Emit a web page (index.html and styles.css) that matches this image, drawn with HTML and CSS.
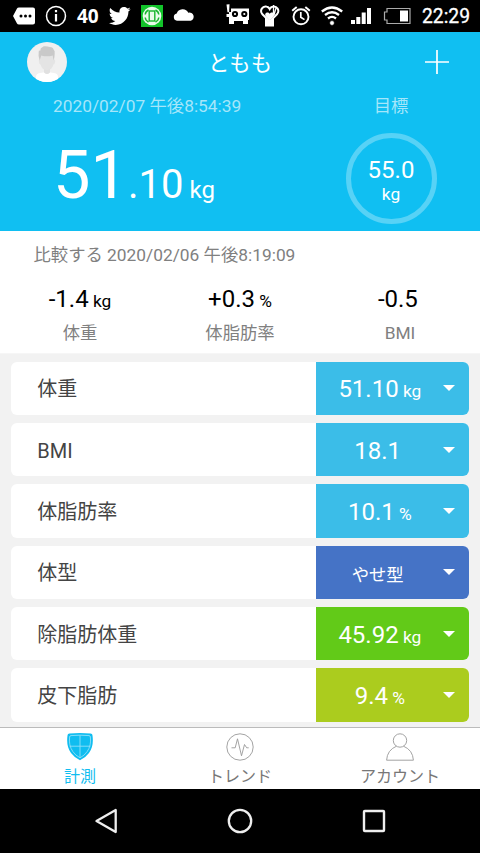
FILE: index.html
```html
<!DOCTYPE html>
<html lang="ja">
<head>
<meta charset="utf-8">
<title>ともも</title>
<link rel="stylesheet" href="styles.css">
</head>
<body>
<div class="screen">
  <div class="status">
    <div class="status-left">
      <svg width="22" height="22" viewBox="13 5 22 22"><path d="M13 16l4-7.500q.5-1 2-1h14q2 0 2 2v13q0 2-2 2H19q-1.500 0-2-1z" fill="#fff"/><circle cx="21" cy="16" r="1.500"/><circle cx="25.500" cy="16" r="1.500"/><circle cx="30" cy="16" r="1.500"/></svg>
      <svg width="22" height="22" viewBox="45 5 22 22"><circle cx="56" cy="16" r="9.500" fill="none" stroke="#fff" stroke-width="1.500"/><path d="M56 14v7.500M56 10v2.300" stroke="#fff" stroke-width="2.200"/></svg>
      <span class="count">40</span>
      <svg width="22" height="22" viewBox="1.800 2 21 21"><path fill="#fff" d="M22.46,6C21.69,6.35 20.86,6.58 20,6.69C20.88,6.16 21.56,5.32 21.88,4.31C21.05,4.81 20.13,5.16 19.16,5.36C18.37,4.5 17.26,4 16,4C13.65,4 11.73,5.92 11.73,8.29C11.73,8.63 11.77,8.96 11.84,9.27C8.28,9.09 5.11,7.38 3,4.79C2.63,5.42 2.42,6.16 2.42,6.94C2.42,8.43 3.17,9.75 4.33,10.5C3.62,10.5 2.96,10.3 2.38,10C2.38,12.11 3.86,13.85 5.82,14.24C5.46,14.34 5.08,14.39 4.69,14.39C4.42,14.39 4.15,14.36 3.89,14.31C4.43,16 6,17.26 7.89,17.29C6.43,18.45 4.58,19.13 2.56,19.13C2.22,19.13 1.88,19.11 1.54,19.07C3.44,20.29 5.7,21 8.12,21C16,21 20.33,14.46 20.33,8.79C20.33,8.6 20.33,8.42 20.32,8.23C21.16,7.63 21.88,6.87 22.46,6Z"/></svg>
      <svg width="22" height="22" viewBox="141 5 22 22"><path fill="#12c42a" d="M141 5h22v22h-22z"/><circle cx="152" cy="16" r="9.300" fill="#e9fbe9"/><g fill="none" stroke="#18b52c" stroke-width="1.400"><rect x="149.200" y="11" width="5.600" height="10"/><path d="M148.500 10q-3 1.500-3.300 4.500M155.500 10q3 1.500 3.300 4.500M148.500 22q-3-1.500-3.300-4.500M155.500 22q3-1.500 3.300-4.500"/></g></svg>
      <svg width="22" height="22" viewBox="173 5 22 22"><path fill="#fff" d="M177 20.700a3.600 3.600 0 0 1-.3-7.100 6.200 6.200 0 0 1 11.600-.8 4 4 0 0 1 2.500 7.900z"/></svg>
    </div>
    <div class="status-right">
      <svg class="i-robot" width="24" height="24" viewBox="225 4 24 24"><path d="M228 8.500h20V20h-1v4H242v-3h-9v3h-5z" fill="#fff"/><path d="M225 4h5v8h-5z"/><path d="M225.500 4.500l3-.3-.4 8h-1.600z" fill="#fff"/><path d="M225.500 14h3.500v3h-3.500z" fill="#fff"/><circle cx="234" cy="14" r="2.100" fill="#fff" stroke="#000" stroke-width="2"/><circle cx="243.300" cy="14" r="2.100" fill="#fff" stroke="#000" stroke-width="2"/></svg>
      <svg class="i-heart" width="22" height="24" viewBox="258 4 22 24"><path d="M264 18h9v8.500h-9z" fill="#fff"/><path d="M268.700 21.500l-7.500-7.500c-2.800-3.500.3-8.300 4.300-7.500 1.800.3 2.700 1.500 3.200 2.500.5-1 1.400-2.200 3.200-2.500 4-.8 7.100 4 4.300 7.500z" fill="#000" stroke="#fff" stroke-width="2"/><path d="M268.700 20.500l-4-4.300c-2-3 2.200-5.200 4-2.400 1.800-2.800 6-.6 4 2.400z" fill="#fff"/><path d="M272.500 5v9M275 8l-2 7" stroke="#fff" stroke-width="1.300"/></svg>
      <svg class="i-alarm" width="22" height="22" viewBox="289 5 22 22"><g fill="none" stroke="#fff"><circle cx="300" cy="16.800" r="7.500" stroke-width="1.900"/><path d="M299.800 12v5.300l3.700 2.300" stroke-width="1.700"/><path d="M291.200 10.800l4.500-3.700M308.800 10.800l-4.500-3.700" stroke-width="2"/></g></svg>
      <svg class="i-wifi" width="24" height="22" viewBox="319 5 24 22"><g fill="none" stroke="#fff" stroke-width="2.300"><path d="M320.800 11.500q10.200-8 20.400 0M324 15q7-5.500 14 0M327 18.500q4-3.300 8 0"/></g><circle cx="331" cy="23" r="2.400" fill="#fff" stroke="#000" stroke-width=".7"/></svg>
      <svg class="i-signal" width="22" height="22" viewBox="349 5 22 22"><path fill="#fff" d="M350 20h4v4h-4zM355.300 17h4v7h-4zM360.700 12.500h4V24h-4zM366 8h4v16h-4z"/></svg>
      <svg class="i-battery" width="28" height="22" viewBox="382 5 28 22"><path d="M386 8.500h23v15h-23v-3.500h-2.500v-8h2.500z" fill="none" stroke="#aaa" stroke-width="1.200"/><path d="M399 10.500h8v11h-8z" fill="#fff"/></svg>
      <span class="clock">22:29</span>
    </div>
  </div>

  <header class="hero">
    <div class="titlebar">
      <svg class="avatar" viewBox="0 0 40 40"><defs><clipPath id="disc"><circle cx="20" cy="20" r="20"/></clipPath></defs><g clip-path="url(#disc)"><path fill="#f0f0f0" d="M0 0h40v40H0z"/><path fill="#fff" d="M9 40v-5q0-3.500 4-4 4-.5 5-1h4q1 .5 5 1 4 .5 4 4v5z"/><path fill="#e0e0e0" d="M17 24h6v6.500q-3 3-6 0z"/><path fill="#e4e4e4" d="M12.500 18q-1-.5-.6 2 .4 2.500 1.600 2.500 1.500 5.500 6.500 5.500t6.500-5.500q1.200 0 1.600-2.500.4-2.500-.6-2V11h-15z"/><path fill="#c9c9c9" d="M12.700 18.500q-1.700-5-1-8.500l.2-1.500 1.300.3q0-3 2.500-3.800l1-.7q3.300-.3 6 .7 3.500.3 4 2.700 1.500 1 .9 4-.1 4-1 6.800l-.9-5q-5.700 1.700-11.500 0z"/></g></svg>
      <h1>ともも</h1>
      <svg class="plus" viewBox="0 0 24 24"><path d="M12 0v24M0 12h24" stroke="#fff" stroke-width="1.700"/></svg>
    </div>
    <div class="hero-body">
      <div class="measure">
        <div class="caption">2020/02/07 午後8:54:39</div>
        <div class="weight">51<span class="fraction">.10</span><span class="unit">kg</span></div>
      </div>
      <div class="goal">
        <div class="caption">目標</div>
        <div class="ring"><span class="goal-value">55.0</span><span class="goal-unit">kg</span></div>
      </div>
    </div>
  </header>

  <section class="compare">
    <div class="compare-date">比較する 2020/02/06 午後8:19:09</div>
    <div class="stats">
      <div class="stat"><div class="stat-value">-1.4<small> kg</small></div><div class="stat-name">体重</div></div>
      <div class="stat"><div class="stat-value">+0.3<small> %</small></div><div class="stat-name">体脂肪率</div></div>
      <div class="stat"><div class="stat-value">-0.5<small> </small></div><div class="stat-name">BMI</div></div>
    </div>
  </section>

  <main class="list">
    <div class="row"><span class="name">体重</span><div class="cell sky"><span class="value">51.10<small> kg</small></span><i class="caret"></i></div></div>
    <div class="row"><span class="name">BMI</span><div class="cell sky"><span class="value">18.1<small> </small></span><i class="caret"></i></div></div>
    <div class="row"><span class="name">体脂肪率</span><div class="cell sky"><span class="value">10.1<small> %</small></span><i class="caret"></i></div></div>
    <div class="row"><span class="name">体型</span><div class="cell blue"><span class="value"><small>やせ型 </small></span><i class="caret"></i></div></div>
    <div class="row"><span class="name">除脂肪体重</span><div class="cell green"><span class="value">45.92<small> kg</small></span><i class="caret"></i></div></div>
    <div class="row"><span class="name">皮下脂肪</span><div class="cell lime"><span class="value">9.4<small> %</small></span><i class="caret"></i></div></div>
  </main>

  <nav class="tabs">
    <div class="tab active">
      <svg width="28" height="28" viewBox="0 0 28 28"><path d="M1.500 2.500Q1.500.7 3.500.6q10.500-1 21 0 2 .1 2 1.900 1.500 11-3.500 17.500-3.500 4.800-9 7.300-5.500-2.500-9-7.300-5-6.500-3.500-17.500z" fill="#10bdf0"/><path d="M3.600 4q0-1.300 1.400-1.400 9-.8 18 0 1.400.1 1.400 1.400 1 8.500-3.200 14.500Q18.500 22.500 14 24.800 9.500 22.500 6.800 18.500 2.600 12.500 3.600 4zM14 2.300v22.500M3.600 13.200h20.800" fill="none" stroke="#8fe0f8" stroke-width=".9"/></svg>
      <span>計測</span>
    </div>
    <div class="tab">
      <svg width="28" height="28" viewBox="0 0 28 28" fill="none" stroke="#999" stroke-width=".9"><circle cx="14" cy="14" r="13.200"/><path d="M5.500 14.800h3.700l2.300-9 4 17 3-11.300 2.200 3.300h2"/></svg>
      <span>トレンド</span>
    </div>
    <div class="tab">
      <svg width="28" height="28" viewBox="0 0 28 28" fill="none" stroke="#999" stroke-width=".9"><circle cx="14" cy="7.500" r="6.700"/><path d="M10.500 13.200Q1.200 17 .6 27.200h26.800Q26.800 17 17.500 13.200"/></svg>
      <span>アカウント</span>
    </div>
  </nav>

  <div class="system">
    <svg width="28" height="28" viewBox="0 0 28 28"><path d="M3.500 14L22.700 3v22z" fill="none" stroke="#eee" stroke-width="2.300" stroke-linejoin="round"/></svg>
    <svg width="28" height="28" viewBox="0 0 28 28"><circle cx="14" cy="14" r="11.200" fill="none" stroke="#eee" stroke-width="2.300"/></svg>
    <svg width="28" height="28" viewBox="0 0 28 28"><rect x="4" y="4" width="20" height="20" rx=".8" fill="none" stroke="#eee" stroke-width="2.400"/></svg>
  </div>
</div>
</body>
</html>
```
FILE: styles.css
```css
* { box-sizing: border-box; }
body {
  margin: 0;
  font-family: Roboto, "Noto Sans CJK JP", sans-serif;
  background: #f2f2f2;
}
svg { display: block; flex: none; }
small { font-size: 17.33px; }
.screen {
  width: 480px;
  height: 853px;
  display: flex;
  flex-direction: column;
  overflow: hidden;
}

.status {
  height: 32px;
  flex: none;
  display: flex;
  justify-content: space-between;
  background: #000;
  color: #fff;
  padding: 0 9px 0 13px;
}
.status-left, .status-right { display: flex; align-items: center; }
.status-left { gap: 10px; }
.count {
  width: 22px;
  font: bold 19px/32px "Noto Sans", sans-serif;
}
.i-heart { margin-left: 9px; }
.i-alarm { margin-left: 9px; }
.i-wifi { margin-left: 8px; }
.i-signal { margin-left: 6px; }
.i-battery { margin-left: 11px; }
.clock { margin-left: 11px; width: 49px; padding-top: 2px; font-size: 19.3px; line-height: 32px; -webkit-text-stroke: .3px #fff; }

.hero {
  height: 199px;
  flex: none;
  background: #10bff2;
  color: #fff;
}
.titlebar {
  height: 60px;
  display: flex;
  align-items: center;
  justify-content: space-between;
  padding: 0 31px 0 27px;
}
.avatar { width: 40px; height: 40px; }
.plus { width: 24px; height: 24px; }
h1 { margin: 0 0 0 -12px; padding-top: 3px; font-size: 21.33px; line-height: 40px; font-weight: 400; }
.hero-body { display: flex; }
.measure { width: 302px; padding-left: 53px; }
.goal {
  width: 178px;
  display: flex;
  flex-direction: column;
  align-items: center;
}
.caption { font-size: 17.33px; line-height: 28px; color: #a5e6fa; }
.weight { display: flex; align-items: baseline; font-size: 66.67px; line-height: 80px; padding-top: 15px; }
.fraction { font-size: 40px; }
.unit { font-size: 24px; padding-left: 6px; }
.ring {
  width: 91px;
  height: 91px;
  margin-top: 13px;
  padding-top: 5px;
  border: 5px solid #57d2f6;
  border-radius: 50%;
  display: flex;
  flex-direction: column;
  align-items: center;
  justify-content: center;
}
.goal-value { font-size: 24px; line-height: 26px; }
.goal-unit { font-size: 17.33px; line-height: 23px; }

.compare {
  height: 123px;
  flex: none;
  background: #fff;
  color: #808080;
  border-bottom: 1px solid #f6f6f6;
}
.compare-date { font-size: 17.33px; line-height: 24px; padding: 12px 0 0 33.5px; }
.stats { display: grid; grid-template-columns: repeat(3, 160px); padding-top: 16px; text-align: center; }
.stat-value { font-size: 24px; line-height: 32px; color: #000; white-space: pre; }
.stat-name { font-size: 17.33px; line-height: 32px; }

.list {
  flex: 1;
  min-height: 0;
  overflow: hidden;
  display: flex;
  flex-direction: column;
  gap: 8px;
  padding: 7.67px 10.67px 0;
}
.row {
  height: 53.33px;
  flex: none;
  display: flex;
  align-items: center;
  justify-content: space-between;
  background: #fff;
  border-radius: 6px;
  overflow: hidden;
}
.name { padding: 3px 0 0 26.67px; font-size: 20px; line-height: 53px; color: #444; }
.cell {
  width: 153px;
  height: 100%;
  display: flex;
  align-items: center;
  color: #fff;
}
.sky { background: #3bbde8; }
.blue { background: #4573c6; }
.green { background: #62ca18; }
.lime { background: #abcc1e; }
.value { width: 127px; padding-top: 4px; text-align: center; font-size: 24px; line-height: 50px; white-space: pre; }
.caret {
  border: 6px solid transparent;
  border-top-color: #fff;
  border-bottom: 0;
}

.tabs {
  height: 62px;
  flex: none;
  display: grid;
  grid-template-columns: repeat(3, 160px);
  background: #fff;
  border-top: 1px solid #bbb;
  color: #777;
}
.tab {
  display: flex;
  flex-direction: column;
  align-items: center;
  padding-top: 5px;
  font-size: 16px;
  line-height: 31px;
}
.active { color: #10bdf0; }

.system {
  height: 64px;
  flex: none;
  display: flex;
  align-items: center;
  justify-content: center;
  gap: 105.500px;
  background: #000;
}
```
